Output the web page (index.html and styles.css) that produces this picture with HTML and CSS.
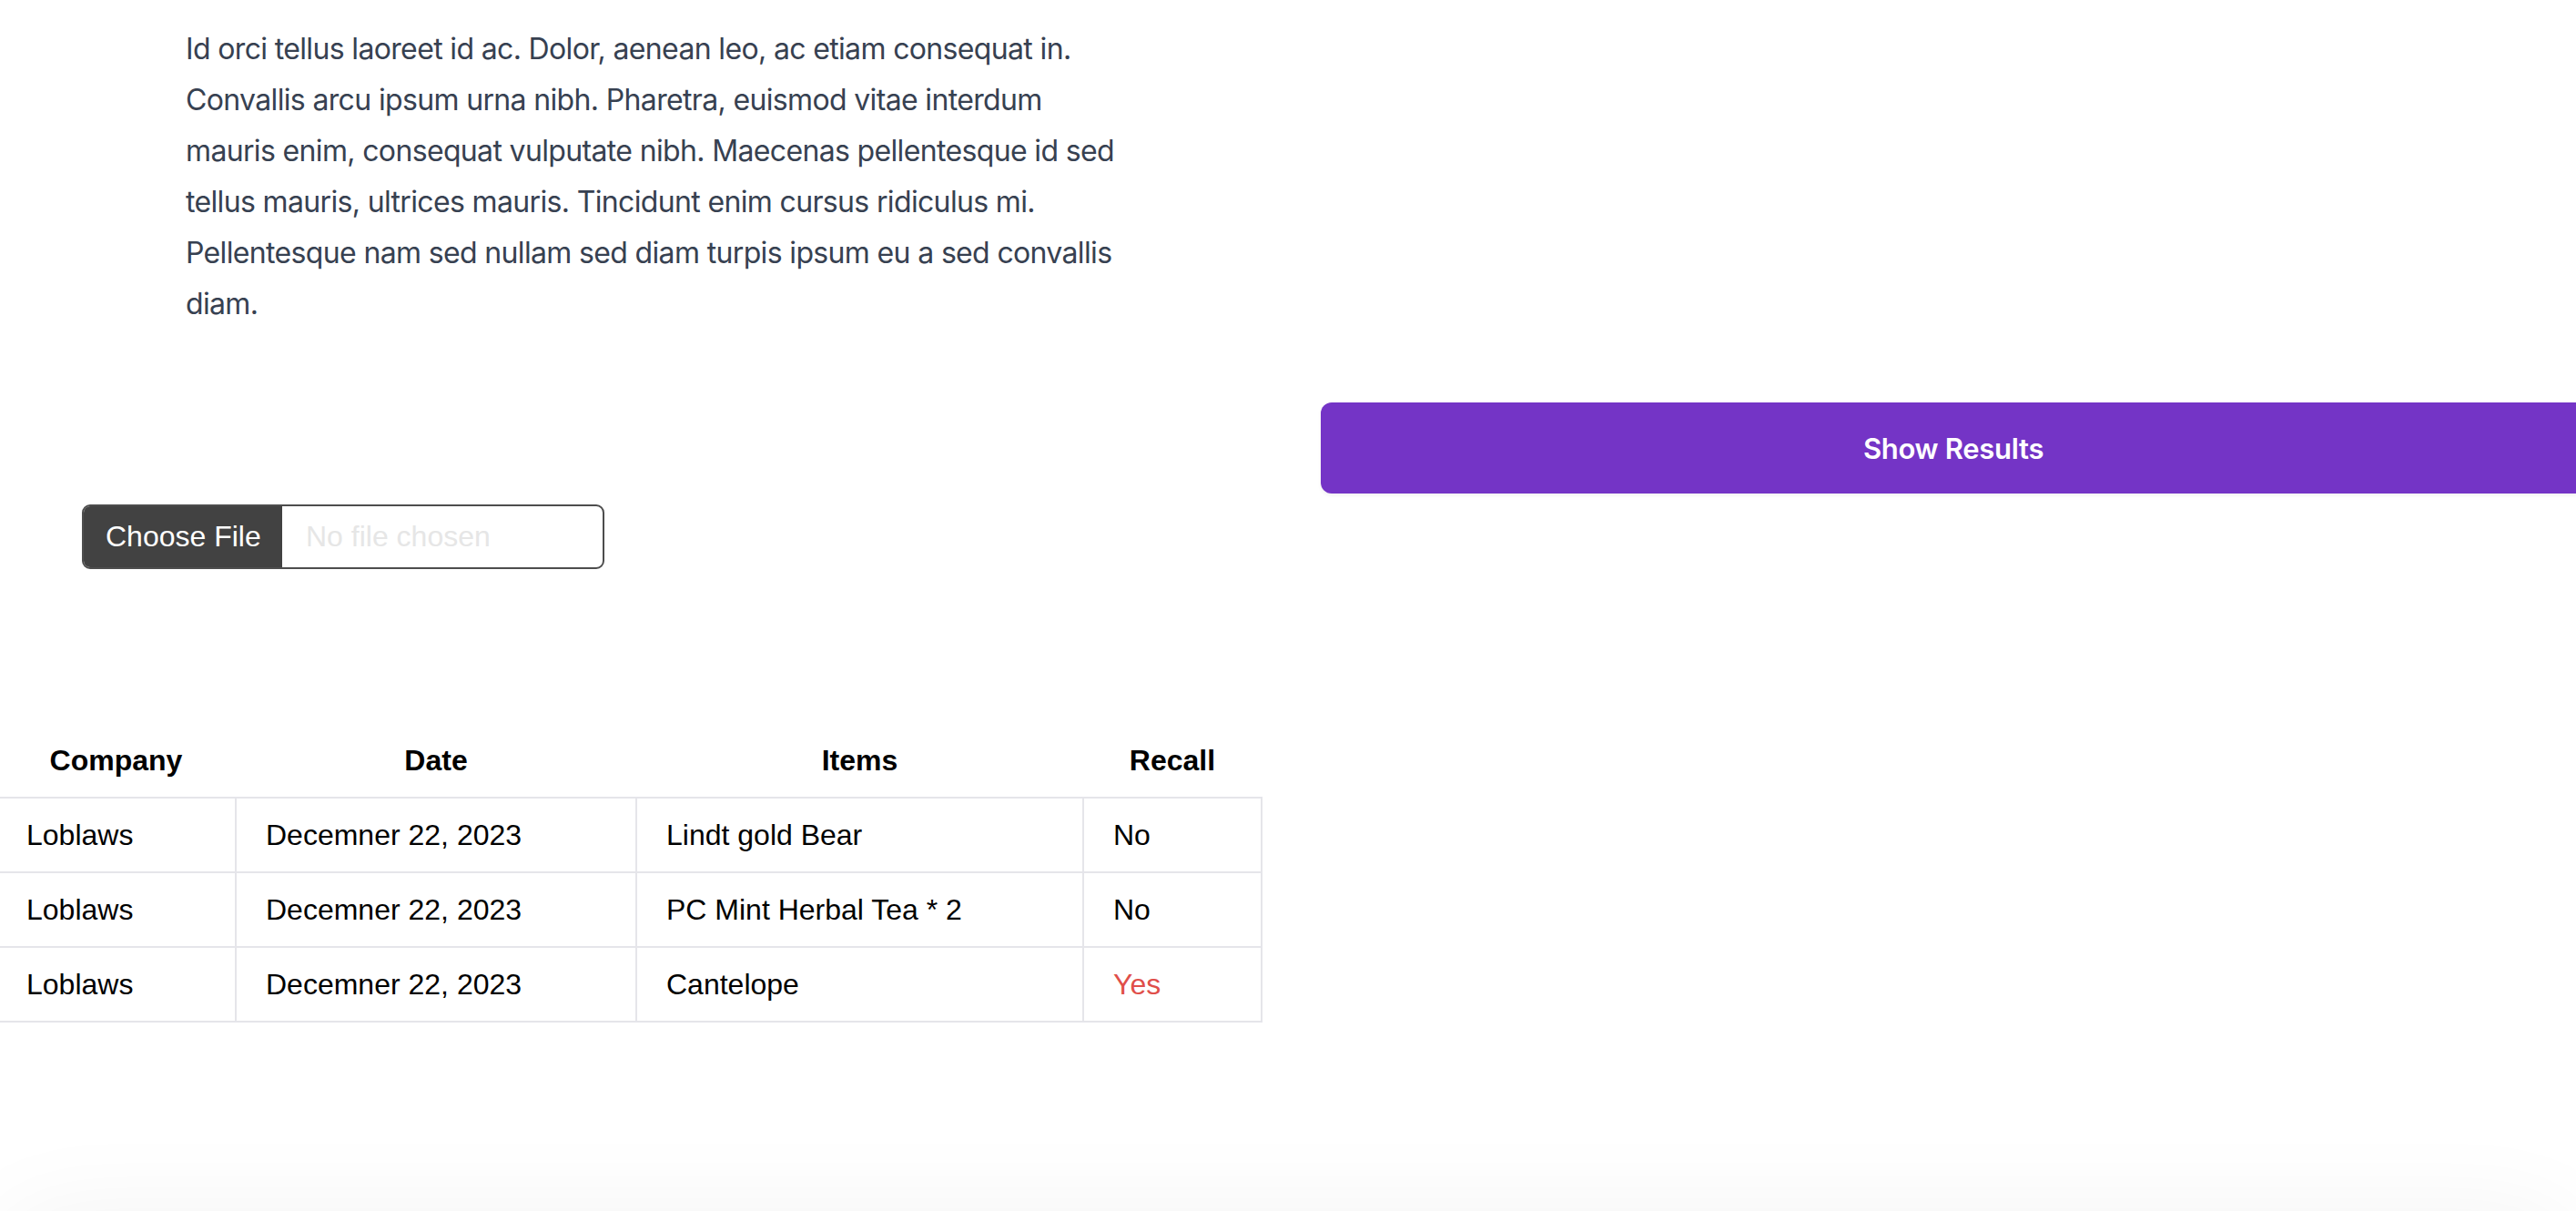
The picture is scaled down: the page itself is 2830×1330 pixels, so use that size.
FILE: index.html
```html
<!DOCTYPE html>
<html lang="en">
<head>
<meta charset="utf-8">
<title>Recall Checker</title>
<link rel="stylesheet" href="styles.css">
</head>
<body>
<div class="page">
  <main class="layout">
    <section class="left">
      <p class="intro">Id orci tellus laoreet id ac. Dolor, aenean leo, ac etiam consequat in. Convallis arcu ipsum urna nibh. Pharetra, euismod vitae interdum mauris enim, consequat vulputate nibh. Maecenas pellentesque id sed tellus mauris, ultrices mauris. Tincidunt enim cursus ridiculus mi. Pellentesque nam sed nullam sed diam turpis ipsum eu a sed convallis diam.</p>
      <label class="file-input">
        <span class="file-btn">Choose File</span>
        <span class="file-name">No file chosen</span>
      </label>
      <table class="results">
        <colgroup>
          <col class="c1"><col class="c2"><col class="c3"><col class="c4">
        </colgroup>
        <thead>
          <tr><th>Company</th><th>Date</th><th>Items</th><th>Recall</th></tr>
        </thead>
        <tbody>
          <tr><td>Loblaws</td><td>Decemner 22, 2023</td><td>Lindt gold Bear</td><td>No</td></tr>
          <tr><td>Loblaws</td><td>Decemner 22, 2023</td><td>PC Mint Herbal Tea * 2</td><td>No</td></tr>
          <tr><td>Loblaws</td><td>Decemner 22, 2023</td><td>Cantelope</td><td class="yes">Yes</td></tr>
        </tbody>
      </table>
    </section>
    <section class="right">
      <button class="show-btn" type="button">Show Results</button>
    </section>
  </main>
  <footer class="footer"></footer>
</div>
</body>
</html>
```
FILE: styles.css
```css
html, body {
  margin: 0;
  padding: 0;
  background: #ffffff;
  overflow: hidden;
}
body {
  width: 2830px;
  height: 1330px;
  font-family: "Liberation Sans", Arial, sans-serif;
}
.page {
  display: flex;
  flex-direction: column;
}
.layout {
  display: grid;
  grid-template-columns: 1415px 1415px;
}
.left {
  display: flex;
  flex-direction: column;
  align-items: flex-start;
}
.intro {
  margin: 26px 0 0 204px;
  width: 1040px;
  font-family: Inter, "Noto Sans", sans-serif;
  font-size: 32px;
  letter-spacing: -0.65px;
  line-height: 56px;
  color: #374151;
}
.file-input {
  margin: 192px 0 0 90px;
  display: flex;
  width: 574px;
  height: 71px;
  box-sizing: border-box;
  border: 2px solid #4d4d4d;
  border-radius: 9px;
  overflow: hidden;
  font-family: "Liberation Sans", Arial, sans-serif;
  font-size: 32px;
}
.file-btn {
  display: flex;
  align-items: center;
  width: 218px;
  box-sizing: border-box;
  padding-left: 24px;
  background: #424242;
  color: #ffffff;
}
.file-name {
  display: flex;
  align-items: center;
  padding-left: 26px;
  color: #e6e6e6;
}
.results {
  margin: 170px 0 0 -5px;
  border-collapse: collapse;
  font-size: 32px;
  color: #000000;
}
.c1 { width: 263px; }
.c2 { width: 440px; }
.c3 { width: 491px; }
.c4 { width: 196px; }
.results th {
  height: 80px;
  padding: 0;
  font-weight: bold;
  text-align: center;
}
.results td {
  height: 80px;
  padding: 0 32px;
  border: 2px solid #e5e5ea;
  text-align: left;
}
.results td.yes {
  color: #e04f4a;
}
.right {
  display: flex;
  flex-direction: column;
}
.show-btn {
  margin: 442px 0 0 36px;
  width: 1390px;
  height: 100px;
  border: none;
  border-radius: 12px;
  background: #7434c6;
  color: #ffffff;
  font-family: Inter, "Noto Sans", sans-serif;
  font-size: 31px;
  letter-spacing: -0.3px;
  font-weight: 600;
  box-shadow: 0 2px 4px rgba(0, 0, 0, 0.06);
}
.footer {
  margin-top: 209px;
  height: 200px;
  box-shadow: 0 0 110px rgba(0, 0, 0, 0.05);
  border-radius: 60px;
}
```
